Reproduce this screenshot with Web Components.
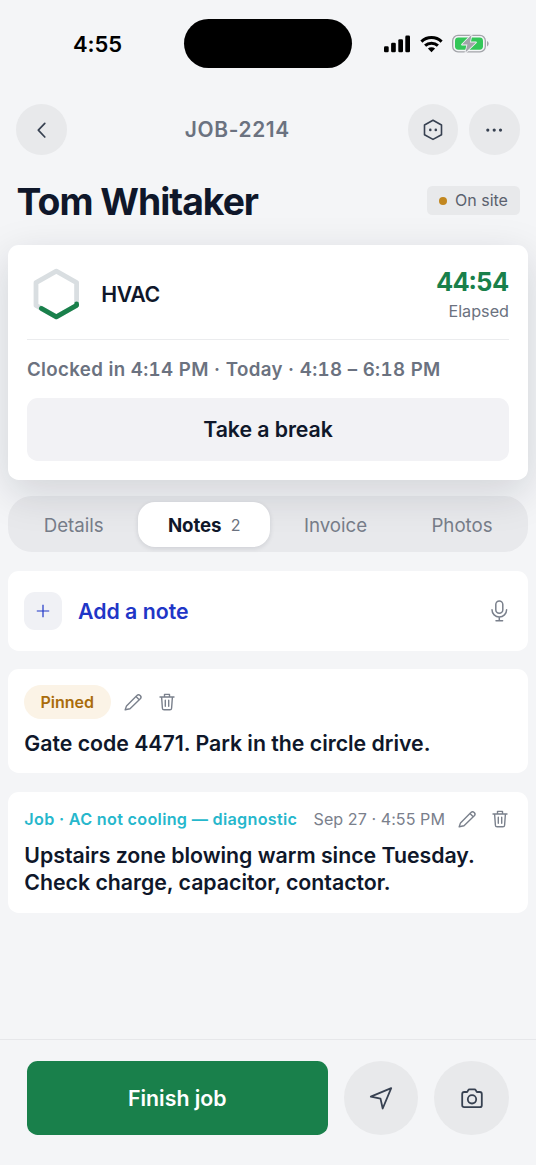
<!DOCTYPE html>
<html lang="en">
<head>
<meta charset="utf-8">
<title>JOB-2214</title>
<style>
html,body{margin:0;background:#f4f5f7}
body{font-family:Inter,"Liberation Sans",sans-serif;color:#0f172a;width:536px;height:1165px;overflow:hidden}
</style>
</head>
<body>
<job-screen></job-screen>
<script>
const define=(name,html)=>customElements.define(name,class extends HTMLElement{
  constructor(){super();this.attachShadow({mode:'open'}).innerHTML='<style>*{box-sizing:border-box}:host{box-sizing:border-box}svg{display:block;flex:none}</style>'+html;}
});

define('status-bar',`<style>
:host{display:grid;grid-template-columns:184.4px 167.2px 1fr;height:104px;padding-top:19px;align-items:start;color:#000}
.time{font-size:22px;font-weight:600;line-height:50px;padding-left:73px;letter-spacing:-.1px}
.island{height:48.7px;border-radius:25px;background:#000}
.signals{display:flex;align-items:center;height:50px;padding-left:32.4px;gap:9.7px}
</style>
<div class="time"><span>4:55</span></div><div class="island"></div>
<div class="signals">
<svg width="26" height="18" viewBox="0 0 26 18"><rect x="0" y="11.2" width="4.7" height="6.1" rx="1.3"/><rect x="7.1" y="7.8" width="4.7" height="9.5" rx="1.3"/><rect x="14.3" y="4.2" width="4.7" height="13.1" rx="1.3"/><rect x="21.3" y=".6" width="4.7" height="16.7" rx="1.3"/></svg>
<svg width="23" height="18" viewBox="0 0 23 18"><g fill="none" stroke="#000" stroke-width="3"><path d="M1.4 6.6a14.6 14.6 0 0 1 20.2 0"/><path d="M5.1 10.7a9.3 9.3 0 0 1 12.8 0"/></g><path d="M11.5 17.2 7.9 13.6a5.3 5.3 0 0 1 7.2 0z"/></svg>
<svg width="38" height="20" viewBox="0 0 38 20"><rect x=".7" y="1.4" width="32.6" height="16.4" rx="5.3" fill="none" stroke="#a2a4a9" stroke-width="1.3"/><path d="M35 7v5.4q1.7-.8 1.7-2.7T35 7z" fill="#a2a4a9"/><rect x="3" y="3.5" width="28" height="12.2" rx="3.4" fill="#34c759"/><path d="M19.6.8 10 10.6h5.4l-2 8L24 8.4h-6z" fill="#a2a4a9" stroke="#f4f5f7" stroke-width="1.6" stroke-linejoin="round" paint-order="stroke"/></svg>
</div>`);

define('round-button',`<style>
:host{display:flex;align-items:center;justify-content:center;width:var(--size,50.7px);height:var(--size,50.7px);border-radius:50%;background:#e8e9eb;flex:none}
</style><slot></slot>`);

define('job-header',`<style>
:host{display:flex;align-items:center;padding:0 16.3px;height:51px}
.right{display:flex;gap:10.7px}
.id{flex:1;text-align:center;font-size:20.9px;font-weight:600;color:#6b7280;letter-spacing:.65px;line-height:26px}
</style>
<round-button><svg width="20" height="20" viewBox="0 0 20 20" fill="none" stroke="#374151" stroke-width="1.7" stroke-linecap="round" stroke-linejoin="round"><path d="m12.8 3.4-6.5 6.8 6.5 6.8"/></svg></round-button>
<div class="id"><span>JOB-2214</span></div>
<div class="right"><round-button><svg width="22" height="22" viewBox="0 0 22 22" fill="none" stroke="#374151" stroke-width="1.6" stroke-linejoin="round"><path d="m11 1.2 8.5 4.8v9.7L11 20.4l-8.5-4.7V6z"/><g fill="#374151" stroke="none"><circle cx="8.3" cy="10.9" r="1.3"/><circle cx="13.8" cy="10.9" r="1.3"/></g></svg></round-button><round-button><svg width="20" height="20" viewBox="0 0 20 20" fill="#374151"><circle cx="3.8" cy="10.1" r="1.6"/><circle cx="10.2" cy="10.1" r="1.6"/><circle cx="16.5" cy="10.1" r="1.6"/></svg></round-button></div>`);

define('status-badge',`<style>
:host{display:flex;align-items:center;height:29.4px;padding:0 11.7px;border-radius:5.3px;background:#e8e9eb;color:#5b616e;font-size:16px;line-height:29px;gap:8px}
i{width:8.4px;height:8.4px;border-radius:50%;background:#c2871f}
</style><i></i><span><slot></slot></span>`);

define('customer-row',`<style>
:host{display:flex;justify-content:space-between;align-items:center;padding:0 16.4px 0 16.6px;height:90.4px}
h1{margin:3px 0 0;font-size:37.3px;font-weight:700;letter-spacing:-1px;line-height:46px}status-badge{margin-top:1px}
</style><h1><span>Tom Whitaker</span></h1><status-badge>On site</status-badge>`);

define('clock-card',`<style>
:host{display:flex;flex-direction:column;margin:0 8px;height:235px;padding:19px;background:#fff;border-radius:10.7px;box-shadow:0 12.5px 42px rgba(15,23,42,.15)}
.top{display:flex;align-items:center;height:75.6px;border-bottom:1.3px solid #ebecee;padding-bottom:15px}
.trade{font-size:21.3px;font-weight:600;line-height:28px;margin-left:15.3px;flex:1;letter-spacing:-.4px}
.time{text-align:right}
.time b{display:block;font-size:25.4px;line-height:32px;font-weight:700;color:#19804b;font-variant-numeric:tabular-nums}
.time em{display:block;font-style:normal;font-size:16.2px;line-height:22px;color:#6b7280;margin-top:2.4px}
.clock{font-size:18.7px;line-height:26px;font-weight:600;color:#6b7280;margin-top:17.3px;letter-spacing:.33px;font-variant-numeric:tabular-nums;white-space:nowrap}
.break{margin-top:15.2px;height:63.8px;border-radius:10.7px;background:#f2f2f5;font-size:21.3px;font-weight:600;line-height:63px;text-align:center;letter-spacing:-.07px}
</style>
<div class="top"><svg width="59" height="56" viewBox="27 265.4 59 56" fill="none" stroke-width="4.8" stroke-linejoin="round" stroke-linecap="round"><path d="m56.3 270.6 20.3 11.5v22.7l-20.3 11.5L36 304.8v-22.7z" stroke="#d9dee1"/><path d="M76.6 303.3v1.4l-20.3 11.6-15-8.5" stroke="#19804b"/></svg>
<div class="trade"><span>HVAC</span></div><div class="time"><b><span>44:54</span></b><em><span>Elapsed</span></em></div></div>
<div class="clock"><span>Clocked in 4:14 PM · Today · 4:18 – 6:18 PM</span></div>
<div class="break"><span>Take a break</span></div>`);

define('tab-item',`<style>
:host{display:flex;align-items:center;justify-content:center;height:45.4px;font-size:18.7px;color:#767c88;padding-top:1px}
:host([selected]){background:#fff;border-radius:17px;color:#0f172a;font-weight:700;letter-spacing:-.1px;box-shadow:0 1.5px 5px rgba(15,23,42,.12)}
::slotted(small){font-size:16px;font-weight:400;color:#6b7280;margin-left:9.2px}
</style><span><slot></slot></span><slot name="count"></slot>`);

define('tab-bar',`<style>
:host{display:grid;grid-template-columns:129.3px 131.7px 1fr 122px;margin:16px 8px 0;height:56px;padding:5.5px 5px 0 1px;border-radius:24px;background:rgba(15,23,42,.05)}
tab-item:first-child{padding-right:2px}
</style><tab-item>Details</tab-item><tab-item selected>Notes<small slot="count">2</small></tab-item><tab-item>Invoice</tab-item><tab-item>Photos</tab-item>`);

define('add-note',`<style>
:host{display:flex;align-items:center;height:79.7px;margin:18.8px 8px 0;padding:0 17.3px 0 16px;border-radius:10.7px;background:#fff}
.plus{display:flex;align-items:center;justify-content:center;width:37.7px;height:37.7px;border-radius:11px;background:#f0f1f5}
.label{flex:1;margin-left:16.3px;font-size:21.3px;line-height:28px;font-weight:600;color:#1f36c7}
</style><div class="plus"><svg width="14" height="14" viewBox="0 0 14 14" stroke="#1f36c7" stroke-width="1.2" fill="none"><path d="M.8 7h12.4M7 .8v12.4"/></svg></div>
<div class="label"><span>Add a note</span></div>
<svg width="24" height="24" viewBox="0 0 24 24" fill="none" stroke="#7a808c" stroke-width="1.5" stroke-linecap="round" stroke-linejoin="round"><rect x="8.8" y="2" width="7" height="12.3" rx="3.5"/><path d="M5 10.7a7.3 7.3 0 0 0 14.6 0M12.3 18v3.6M9 21.7h6.6"/></svg>`);

define('note-actions',`<style>
:host{display:flex;gap:13.6px;flex:none}
</style>
<svg width="20" height="20" viewBox="0 0 20 20" fill="none" stroke="#7a808c" stroke-width="1.4" stroke-linecap="round" stroke-linejoin="round"><path d="M2.2 17.8 3.5 13.9 13.9 3.6a2.3 2.3 0 0 1 3.4 3.2L7 16.8zM13 4.6l3.2 3.2"/></svg>
<svg width="20" height="20" viewBox="0 0 20 20" fill="none" stroke="#7a808c" stroke-width="1.4" stroke-linecap="round" stroke-linejoin="round"><path d="M3 5h14M4.6 5l.8 11.2q.1 1.6 1.7 1.6h5.8q1.6 0 1.7-1.6L15.4 5M7.5 4.7V2.4h5v2.3M8.3 8.3v6M11.7 8.3v6"/></svg>`);

define('note-card',`<style>
:host{display:block;margin:18.5px 8px 0;padding:15.8px 17.8px 0 16.3px;height:var(--h);border-radius:10.7px;background:#fff}
.meta{display:flex;align-items:center;height:var(--meta)}
.body{font-size:21.3px;line-height:27.7px;font-weight:600;letter-spacing:-.02px;margin-top:var(--gap);white-space:pre-line}
</style><div class="meta"><slot name="meta"></slot></div><div class="body"><span><slot></slot></span></div>`);

define('pin-label',`<style>
:host{display:block;height:33.5px;border-radius:17px;width:86.6px;text-align:center;font-size:16px;line-height:34.8px;font-weight:600;background:#fbf3e6;color:#a96c0b;margin-right:12.2px;letter-spacing:-.05px;padding-right:.8px}
</style><span><slot></slot></span>`);
define('job-label',`<style>:host{display:block;font-size:16.2px;font-weight:600;color:#26b7cc;letter-spacing:.3px;line-height:22px;flex:1;white-space:nowrap}</style><span><slot></slot></span>`);
define('note-date',`<style>:host{display:block;font-size:16.1px;color:#7a808c;letter-spacing:.05px;line-height:22px;white-space:nowrap;margin-right:11.6px}</style><span><slot></slot></span>`);

define('action-bar',`<style>
:host{display:flex;gap:16px;margin-top:auto;height:126.5px;border-top:1.3px solid #e6e7ea;padding:21px 27px 0;--size:74.7px}
.finish{flex:1;height:74.7px;border-radius:10.7px;background:#19804b;color:#fff;text-align:center;line-height:74.7px;font-size:21.3px;font-weight:600}
</style><div class="finish"><span>Finish job</span></div>
<round-button><svg width="26" height="26" viewBox="0 0 26 26" fill="none" stroke="#374151" stroke-width="1.8" stroke-linejoin="round"><path d="M2.8 11.6 23.2 3.2l-8.5 20.3-2.2-9.9z"/></svg></round-button>
<round-button><svg width="26" height="26" viewBox="0 0 26 26" fill="none" stroke="#374151" stroke-width="1.8" stroke-linejoin="round"><path d="M5.2 7h2.4q.7 0 1-.7l.5-1q.5-1 1.5-1h4.8q1 0 1.5 1l.5 1q.3.7 1 .7h2.4q2 0 2 2v11.2q0 2-2 2H5.2q-2 0-2-2V9q0-2 2-2z"/><circle cx="13" cy="14.3" r="4.2"/></svg></round-button>`);

define('job-screen',`<style>
:host{display:flex;flex-direction:column;height:1165px}
.a{--h:104px;--meta:33.5px;--gap:11.2px}.b{--h:121px;--meta:23px;--gap:11px}
</style>
<status-bar></status-bar><job-header></job-header><customer-row></customer-row><clock-card></clock-card><tab-bar></tab-bar><add-note></add-note>
<note-card class="a"><pin-label slot="meta">Pinned</pin-label><note-actions slot="meta"></note-actions>Gate code 4471. Park in the circle drive.</note-card>
<note-card class="b"><job-label slot="meta">Job · AC not cooling — diagnostic</job-label><note-date slot="meta">Sep 27 · 4:55 PM</note-date><note-actions slot="meta"></note-actions>Upstairs zone blowing warm since Tuesday.
Check charge, capacitor, contactor.</note-card>
<action-bar></action-bar>`);
</script>
</body>
</html>
